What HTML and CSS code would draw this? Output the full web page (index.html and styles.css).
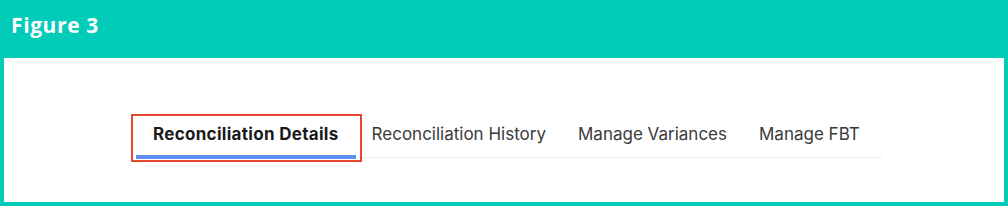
FILE: index.html
```html
<!DOCTYPE html>
<html lang="en">
<head>
  <meta charset="UTF-8">
  <title>Figure 3</title>
  <link rel="stylesheet" href="styles.css">
</head>
<body>
  <div class="figure-title">Figure 3</div>
  <div class="panel">
    <nav class="tabs">
      <a class="tab active">Reconciliation Details</a>
      <a class="tab">Reconciliation History</a>
      <a class="tab">Manage Variances</a>
      <a class="tab">Manage FBT</a>
    </nav>
  </div>
</body>
</html>
```

FILE: styles.css
```css
body {
  margin: 0;
  background-color: #00ccb8;
  font-family: Inter, 'Liberation Sans', sans-serif;
}
.figure-title {
  height: 58px;
  box-sizing: border-box;
  padding: 11px 0 0 11px;
  font-family: 'Open Sans', sans-serif;
  font-weight: 700;
  font-size: 21px;
  line-height: 28px;
  letter-spacing: 0.6px;
  color: white;
}
.panel {
  margin: 0 4px;
  height: 144px;
  background-color: white;
  overflow: hidden;
}
.tabs {
  display: flex;
  width: 747px;
  margin: 56px 0 0 132px;
  border-bottom: 1px solid #eeeeee;
}
.tab {
  position: relative;
  padding: 10px 16px 11px;
  margin-bottom: -2px;
  font-size: 17px;
  line-height: 20px;
  color: #3a3a3a;
  border-bottom: 4px solid transparent;
}
.tab.active {
  padding: 10px 17px 11px;
  font-weight: 700;
  letter-spacing: 0.3px;
  color: #1a1a1a;
  border-bottom-color: #5b8ff0;
}
.tab.active::after {
  content: '';
  position: absolute;
  top: 0;
  bottom: -7px;
  left: -5px;
  right: -6px;
  border: 2px solid #e8472f;
}
```
